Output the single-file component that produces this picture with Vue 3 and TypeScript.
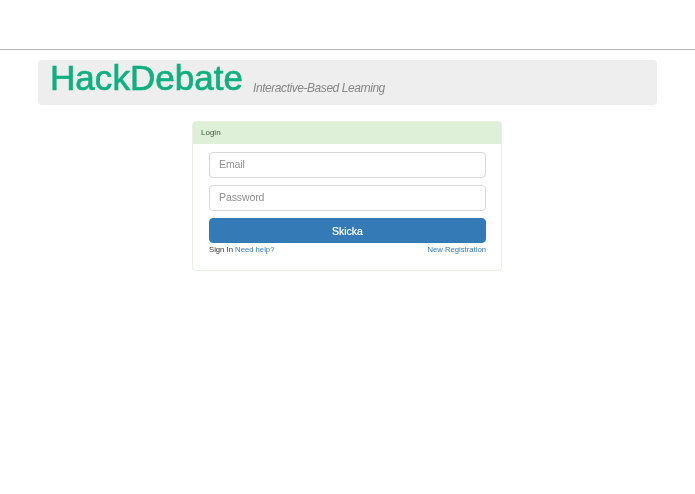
<script setup lang="ts">
const appName = 'HackDebate'
const tagline = 'Interactive-Based Learning'
</script>

<template>
  <div class="page">
    <hr class="top-rule" />
    <div class="container">
      <header class="jumbo">
        <h1 class="brand">{{ appName }}</h1>
        <span class="tagline">{{ tagline }}</span>
      </header>

      <section class="panel">
        <div class="panel-heading">Login</div>
        <form class="panel-body" @submit.prevent>
          <input class="field" type="text" placeholder="Email" />
          <input class="field" type="password" placeholder="Password" />
          <button class="submit" type="submit">Skicka</button>
          <div class="links">
            <span>Sign In <a href="#">Need help?</a></span>
            <a href="#">New Registration</a>
          </div>
        </form>
      </section>
    </div>
  </div>
</template>

<style>
html,
body {
  margin: 0;
  background: #fff;
}
</style>

<style scoped>
.page {
  height: 494px;
  padding-top: 49px;
  box-sizing: border-box;
  font-family: "Liberation Sans", Arial, sans-serif;
  color: #333;
  overflow: hidden;
  filter: blur(0.35px);
}

.top-rule {
  margin: 0;
  border: 0;
  height: 1px;
  background: #b4b4b4;
}

.container {
  padding: 10px 38px 0;
}

.jumbo {
  height: 45px;
  display: flex;
  align-items: flex-end;
  padding-left: 12px;
  background: #eee;
  border-radius: 4px;
}

.brand {
  margin: 0 10px 8px 0;
  font-size: 35px;
  line-height: 38px;
  font-weight: 400;
  letter-spacing: 0.05px;
  color: #0eb07f;
  -webkit-text-stroke: 0.7px #0eb07f;
}

.tagline {
  margin-bottom: 10px;
  font-size: 12px;
  line-height: 14px;
  font-style: italic;
  letter-spacing: -0.45px;
  color: #888;
}

.panel {
  width: 310px;
  box-sizing: border-box;
  margin: 16px 0 0 154px;
  background: #fff;
  border: 1px solid #e9f0e2;
  border-radius: 4px;
}

.panel-heading {
  height: 22px;
  padding-left: 8px;
  background: #dff0d8;
  font-size: 8px;
  line-height: 22px;
  color: #3c5a35;
}

.panel-body {
  display: flex;
  flex-direction: column;
  padding: 8px 15px 15px 16px;
}

.field {
  height: 26px;
  margin-bottom: 7px;
  padding: 0 9px 2px;
  box-sizing: border-box;
  background: #fff;
  border: 1px solid #d8d8d8;
  border-radius: 4px;
  font: 10.5px "Liberation Sans", Arial, sans-serif;
  letter-spacing: -0.1px;
  color: #555;
}

.field::placeholder {
  color: #8f8f8f;
  opacity: 1;
}

.submit {
  height: 25px;
  padding: 0;
  background: #337ab7;
  border: 1px solid #337ab7;
  border-radius: 4px;
  font: 10.5px "Liberation Sans", Arial, sans-serif;
  -webkit-text-stroke: 0.2px #fff;
  color: #fff;
}

.links {
  display: flex;
  justify-content: space-between;
  margin-top: 2px;
  font-size: 7.7px;
  line-height: 10px;
  color: #333;
}

.links a {
  color: #337ab7;
  text-decoration: none;
}
</style>
